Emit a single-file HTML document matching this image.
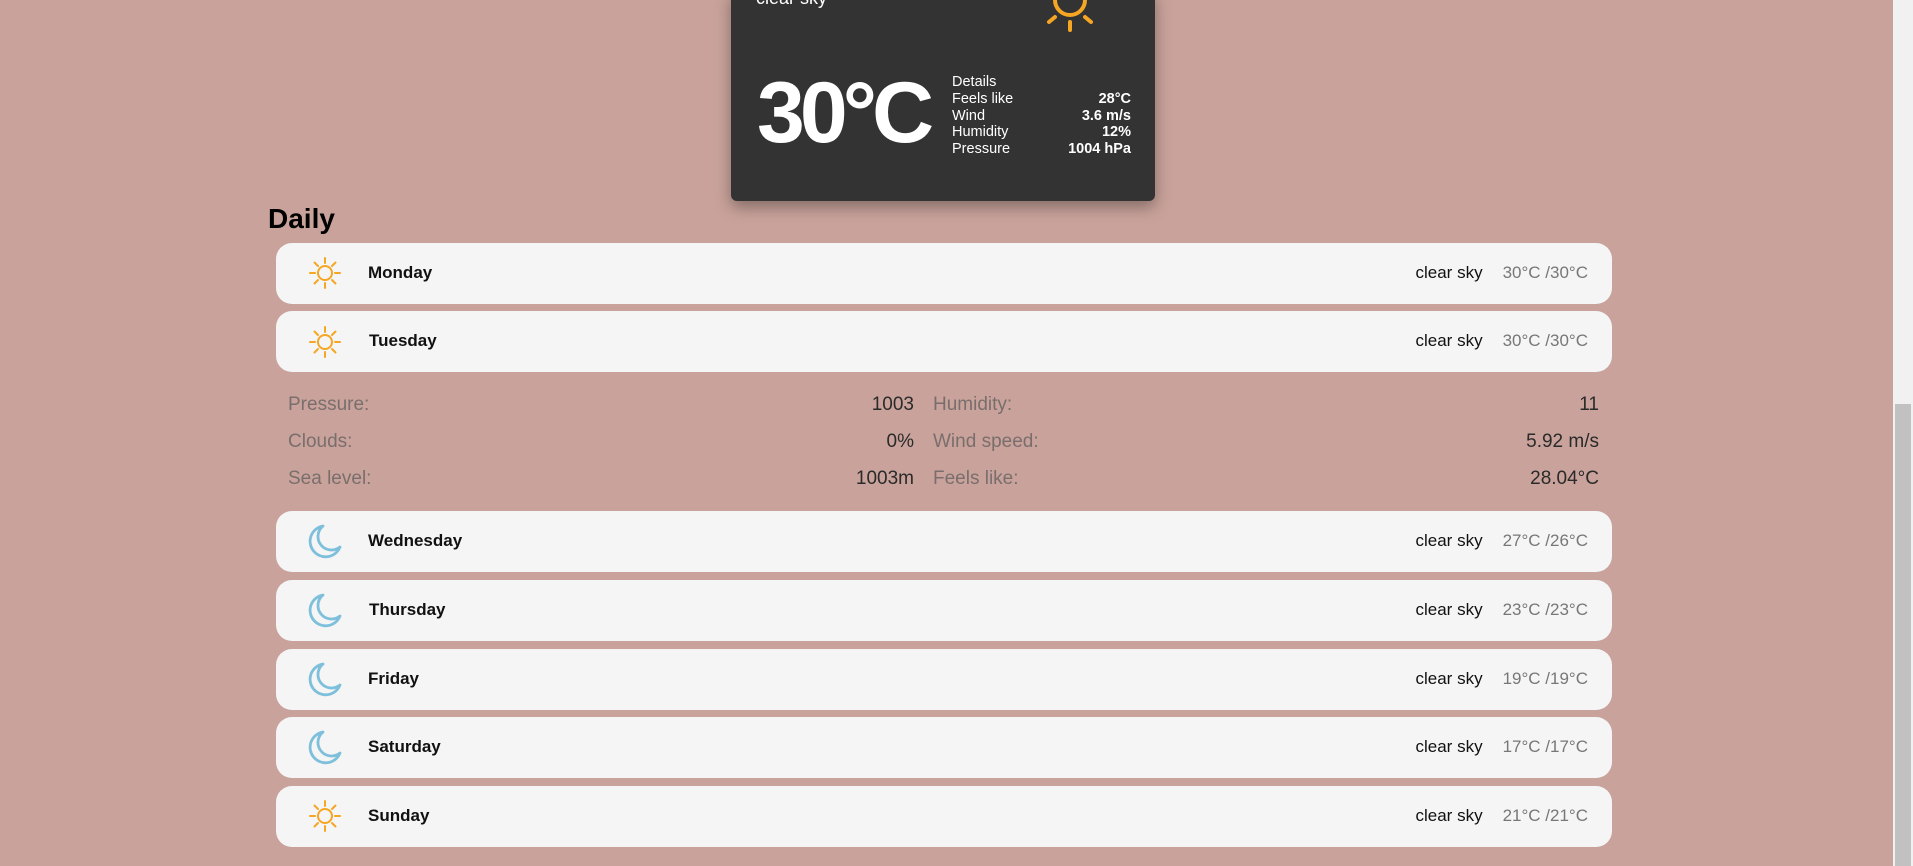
<!DOCTYPE html>
<html><head><meta charset="utf-8"><style>
*{box-sizing:border-box;margin:0;padding:0}
body{width:1913px;height:866px;overflow:hidden;background:#c9a39b;font-family:"Liberation Sans",Arial,sans-serif;position:relative}
.sb{position:absolute;left:1893px;top:0;width:20px;height:866px;background:#f1f1f1}
.th{position:absolute;left:1895px;top:404px;width:16px;height:462px;background:#c1c1c1}
.card{position:absolute;left:731px;top:-10px;width:424px;height:211px;background:#333;border-radius:6px;box-shadow:0 6px 16px rgba(0,0,0,.35);color:#fff}
.big{position:absolute;left:26px;top:73px;font-size:86px;font-weight:bold;letter-spacing:-5px;line-height:100px}
.det{position:absolute;left:221px;top:84px;width:179px;font-size:14.5px;line-height:16.8px}
.det div{display:flex;justify-content:space-between}
.det b{font-weight:bold}
h2{position:absolute;left:268px;top:203px;font-size:28px;font-weight:bold;color:#000}
.row{position:absolute;left:276px;width:1336px;height:61px;background:#f5f5f5;border-radius:16px}
.row svg{position:absolute;left:305px}
.row .d{position:absolute;left:92px;top:20px;font-size:17px;font-weight:bold;color:#111}
.row .r{position:absolute;right:24px;top:20px;font-size:17px;color:#111}
.row .r span{color:#777;margin-left:20px}
.ex{position:absolute;font-size:19px}
.l{color:#7a6e6c}.v{color:#2a2a2a;text-align:right}
</style></head><body>
<div class="card">
<div style="position:absolute;left:25px;top:-2px;font-size:18px">clear sky</div>
<svg style="position:absolute;left:300px;top:5px" width="80" height="45" viewBox="0 0 80 45"><g stroke="#f5a623" stroke-width="4" stroke-linecap="round" fill="none"><circle cx="39" cy="5" r="15"/><line x1="39" y1="27" x2="39" y2="35"/><line x1="24" y1="22" x2="18" y2="27"/><line x1="54" y1="22" x2="60" y2="27"/></g></svg>
<div class="big">30°C</div>
<div class="det"><div><span>Details</span></div><div><span>Feels like</span><b>28°C</b></div><div><span>Wind</span><b>3.6 m/s</b></div><div><span>Humidity</span><b>12%</b></div><div><span>Pressure</span><b>1004 hPa</b></div></div>
</div>
<h2>Daily</h2>
<svg width="0" height="0" style="position:absolute"><defs>
<g id="sun"><g stroke="#f5a623" stroke-width="2" stroke-linecap="round" fill="none"><circle cx="0" cy="0" r="7"/><line x1="0" y1="-10" x2="0" y2="-15"/><line x1="0" y1="10" x2="0" y2="15"/><line x1="-10" y1="0" x2="-15" y2="0"/><line x1="10" y1="0" x2="15" y2="0"/><line x1="7" y1="-7" x2="10.5" y2="-10.5"/><line x1="-7" y1="-7" x2="-10.5" y2="-10.5"/><line x1="7" y1="7" x2="10.5" y2="10.5"/><line x1="-7" y1="7" x2="-10.5" y2="10.5"/></g></g>
<g id="moon"><path d="M-2,-15 A15.5,15.5 0 1 0 15,6 A13,13 0 0 1 -2,-15 Z" fill="none" stroke="#7ec0dc" stroke-width="2.8" stroke-linejoin="round"/></g>
</defs></svg>

<div class="row" style="top:243px"><svg style="left:29px;top:10px" width="40" height="40" viewBox="-20 -20 40 40"><use href="#sun"/></svg><div class="d">Monday</div><div class="r">clear sky<span>30°C /30°C</span></div></div>
<div class="row" style="top:311px"><svg style="left:29px;top:11px" width="40" height="40" viewBox="-20 -20 40 40"><use href="#sun"/></svg><div class="d" style="left:93px">Tuesday</div><div class="r">clear sky<span>30°C /30°C</span></div></div>

<div class="ex l" style="left:288px;top:394px">Pressure:</div><div class="ex v" style="left:800px;width:114px;top:394px">1003</div>
<div class="ex l" style="left:933px;top:394px">Humidity:</div><div class="ex v" style="left:1450px;width:149px;top:394px">11</div>
<div class="ex l" style="left:288px;top:431px">Clouds:</div><div class="ex v" style="left:800px;width:114px;top:431px">0%</div>
<div class="ex l" style="left:933px;top:431px">Wind speed:</div><div class="ex v" style="left:1450px;width:149px;top:431px">5.92 m/s</div>
<div class="ex l" style="left:288px;top:468px">Sea level:</div><div class="ex v" style="left:800px;width:114px;top:468px">1003m</div>
<div class="ex l" style="left:933px;top:468px">Feels like:</div><div class="ex v" style="left:1450px;width:149px;top:468px">28.04°C</div>

<div class="row" style="top:511px"><svg style="left:29px;top:10px" width="40" height="40" viewBox="-20 -20 40 40"><use href="#moon"/></svg><div class="d">Wednesday</div><div class="r">clear sky<span>27°C /26°C</span></div></div>
<div class="row" style="top:580px"><svg style="left:29px;top:10px" width="40" height="40" viewBox="-20 -20 40 40"><use href="#moon"/></svg><div class="d" style="left:93px">Thursday</div><div class="r">clear sky<span>23°C /23°C</span></div></div>
<div class="row" style="top:649px"><svg style="left:29px;top:10px" width="40" height="40" viewBox="-20 -20 40 40"><use href="#moon"/></svg><div class="d">Friday</div><div class="r">clear sky<span>19°C /19°C</span></div></div>
<div class="row" style="top:717px"><svg style="left:29px;top:10px" width="40" height="40" viewBox="-20 -20 40 40"><use href="#moon"/></svg><div class="d">Saturday</div><div class="r">clear sky<span>17°C /17°C</span></div></div>
<div class="row" style="top:786px"><svg style="left:29px;top:10px" width="40" height="40" viewBox="-20 -20 40 40"><use href="#sun"/></svg><div class="d">Sunday</div><div class="r">clear sky<span>21°C /21°C</span></div></div>

<div class="sb"></div><div class="th"></div>
</body></html>
